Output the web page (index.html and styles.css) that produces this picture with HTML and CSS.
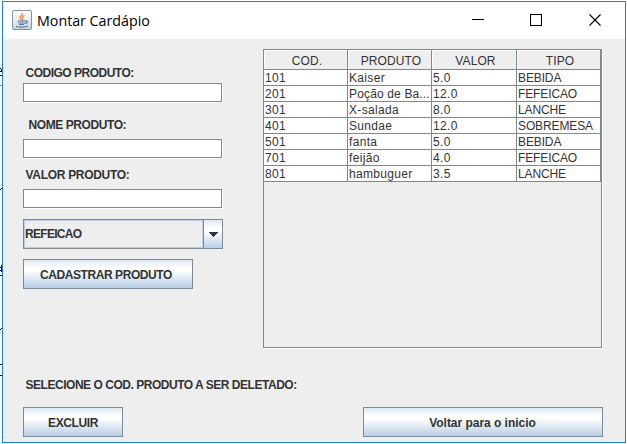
FILE: index.html
```
<!DOCTYPE html>
<html lang="pt-BR">
<head>
<meta charset="utf-8">
<title>Montar Cardápio</title>
<link rel="stylesheet" href="styles.css">
</head>
<body>
<svg class="behind" width="2" height="444" shape-rendering="crispEdges" aria-hidden="true">
  <path d="M0 68.500h1M0 71.500h2M0 75.500h2M1.500 69v2M0 189.500h1M1 188.500h1M0 329.500h1M1 328.500h1M0 364.500h2M0 375.500h2" stroke="#000" fill="none"/>
  <path d="M0 85.500h2" stroke="#5b9a97"/>
  <path d="M0 267.500h2M0 270.500h2M0 275.500h2M1.500 265v7" stroke="#0000a0"/>
</svg>
<main class="window">
  <header class="titlebar">
    <svg class="java" width="20" height="20" viewBox="0 0 20 20" aria-hidden="true">
      <defs><linearGradient id="tile" x2="0" y2="1"><stop stop-color="#fff"/><stop offset=".5" stop-color="#e9eef2"/><stop offset="1" stop-color="#c3d2df"/></linearGradient></defs>
      <rect x=".5" y=".5" width="19" height="19" rx="1.500" fill="url(#tile)" stroke="#8094a8"/>
      <path d="M10.500 3c1 2-3 3-2.500 5 .3 1 1.500 1.500 1.500 2.500M12.500 5.500c-2 1-3 2-2 3.200.6.800.2 1.500-.5 2" fill="none" stroke="#e88745" stroke-width="1.300"/>
      <path d="M5.500 11h8M6 13h7M7 14.500h5M13.500 11c2.500-.5 2.500 2-.5 2.500M4 16.200c3 1.200 9 1.200 12-.2" fill="none" stroke="#557b9e" stroke-width="1.200"/>
    </svg>
    <h1>Montar Cardápio</h1>
    <svg class="controls" width="129" height="14" viewBox="0 0 129 14" aria-hidden="true">
      <path d="M0 7.500h12M58.500 2.500h11v11h-11z" fill="none" stroke="#000" shape-rendering="crispEdges"/>
      <path d="M117.500 2.500l11 11M128.500 2.500l-11 11" fill="none" stroke="#000" stroke-width="1.100"/>
    </svg>
  </header>
  <div class="content">
    <div class="upper">
      <form class="form">
        <label class="first">CODIGO PRODUTO:</label>
        <div class="field"></div>
        <label class="name">NOME PRODUTO:</label>
        <div class="field"></div>
        <label class="price">VALOR PRODUTO:</label>
        <div class="field"></div>
        <div class="combo">
          <span class="selected">REFEICAO</span>
          <span class="arrow"><svg width="10" height="5" viewBox="0 0 10 5" shape-rendering="crispEdges"><path d="M0 0h10L5 5z" fill="#333"/></svg></span>
        </div>
        <button type="button" class="button register"><span>CADASTRAR PRODUTO</span></button>
      </form>
      <div class="pane">
        <table>
          <colgroup><col class="c84"><col class="c84"><col class="c85"><col class="c84"></colgroup>
          <thead><tr><th>COD.</th><th>PRODUTO</th><th>VALOR</th><th>TIPO</th></tr></thead>
          <tbody>
            <tr><td>101</td><td>Kaiser</td><td>5.0</td><td>BEBIDA</td></tr>
            <tr><td>201</td><td class="long">Poção de Ba...</td><td>12.0</td><td>FEFEICAO</td></tr>
            <tr><td>301</td><td>X-salada</td><td>8.0</td><td>LANCHE</td></tr>
            <tr><td>401</td><td>Sundae</td><td>12.0</td><td>SOBREMESA</td></tr>
            <tr><td>501</td><td>fanta</td><td>5.0</td><td>BEBIDA</td></tr>
            <tr><td>701</td><td>feijão</td><td>4.0</td><td>FEFEICAO</td></tr>
            <tr><td>801</td><td>hambuguer</td><td>3.5</td><td>LANCHE</td></tr>
          </tbody>
        </table>
      </div>
    </div>
    <p class="hint">SELECIONE O COD. PRODUTO A SER DELETADO:</p>
    <div class="actions">
      <button type="button" class="button remove"><span>EXCLUIR</span></button>
      <button type="button" class="button back"><span>Voltar para o inicio</span></button>
    </div>
  </div>
</main>
</body>
</html>
```
FILE: styles.css
```
* { box-sizing: border-box; }
body {
  margin: 0;
  width: 627px;
  height: 444px;
  overflow: hidden;
  background: #fff;
  color: #333;
  font: 12px/16px "Liberation Sans", Arial, sans-serif;
}
.behind { position: absolute; left: 0; top: 0; }
.window {
  width: 624px;
  height: 442px;
  margin: 1px 0 0 2px;
  border: 1px solid #1883d7;
  background: #eee;
}
.titlebar {
  display: flex;
  align-items: center;
  height: 37px;
  padding: 0 24px 0 9px;
  background: #fff;
}
.java { flex: none; margin-top: -2px; }
h1 {
  margin: 0 0 0 5px;
  color: #000;
  font: 14.3px/20px "Open Sans", "Noto Sans", sans-serif;
  letter-spacing: -0.03px;
  white-space: nowrap;
}
.controls { margin: -3px 0 0 auto; overflow: visible; }
.content { padding: 10px 23px 0 20px; }
.upper { display: flex; justify-content: space-between; height: 299px; }
.form { width: 200px; font-weight: bold; padding-top: 16px; }
label { display: block; height: 16px; padding-left: 2.500px; white-space: nowrap; }
.first { margin-bottom: 2px; letter-spacing: -0.5px; }
.name { margin: 15px 0 6px; padding-left: 5.500px; letter-spacing: -0.42px; }
.price { margin: 9px 0 6px; letter-spacing: -0.3px; }
.field {
  width: 199px;
  height: 19px;
  background: #fff;
  border: 1px solid #7a8a99;
  box-shadow: 1px 1px 0 #fff;
}
.combo {
  display: flex;
  width: 200px;
  height: 30px;
  margin-top: 11px;
  border: 1px solid #7a8a99;
}
.selected {
  flex: 1;
  border: 1px solid #b8cfe5;
  line-height: 27px;
  letter-spacing: -0.7px;
}
.arrow {
  display: flex;
  align-items: center;
  justify-content: center;
  width: 19px;
  padding-top: 1px;
  border-left: 1px solid #7a8a99;
  background: linear-gradient(#dde8f3, #fff 30%, #fff 40%, #b8cfe5);
}
.button {
  height: 30px;
  padding: 2px 0 0;
  border: 1px solid #7a8a99;
  color: #333;
  font: bold 12px/16px "Liberation Sans", Arial, sans-serif;
  background: linear-gradient(#dde8f3, #fff 30%, #fff 36%, #b8cfe5);
}
.register { display: block; width: 170px; margin-top: 10px; padding-right: 4px; letter-spacing: -0.43px; }
.remove { width: 100px; letter-spacing: -0.4px; }
.back { width: 240px; padding-right: 1px; letter-spacing: -0.03px; }
.pane {
  width: 339px;
  height: 299px;
  border: 1px solid #7a8a99;
  box-shadow: 1px 1px 0 #fff;
}
table { width: 337px; table-layout: fixed; border-collapse: separate; border-spacing: 0; }
.c84 { width: 84px; }
.c85 { width: 85px; }
th, td {
  padding: 1px 0 0 1px;
  border: solid #7a8a99;
  border-width: 0 1px 1px 0;
  white-space: nowrap;
  overflow: hidden;
}
th {
  height: 20px;
  padding: 3px 0 0 3px;
  font-weight: normal;
  line-height: 16px;
  letter-spacing: 0.1px;
  text-align: center;
  box-shadow: inset 1px 1px 0 #fff;
}
td {
  height: 16px;
  line-height: 14px;
  background: #fff;
  letter-spacing: 0.33px;
}
.long { letter-spacing: 0.15px; }
td:last-child { letter-spacing: -0.12px; }
.hint {
  height: 16px;
  margin: 29px 0 14px;
  padding-left: 2.500px;
  font-weight: bold;
  letter-spacing: -0.47px;
  white-space: nowrap;
}
.actions { display: flex; justify-content: space-between; width: 580px; }
```
